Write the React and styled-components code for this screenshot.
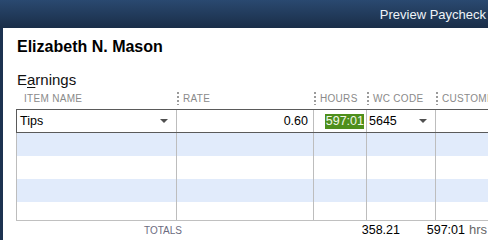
import styled, { createGlobalStyle } from 'styled-components';

const Global = createGlobalStyle`
  html, body {
    margin: 0;
    padding: 0;
    overflow: hidden;
    background: #fff;
  }
  body {
    font-family: "Liberation Sans", Arial, sans-serif;
  }
`;

const COLS = '160px 137px 53px 69px 1fr';

const Window = styled.div`
  width: 488px;
  height: 240px;
  box-sizing: border-box;
  border-left: 3px solid #1c3250;
  background: #fff;
  display: flex;
  flex-direction: column;
`;

const TitleBar = styled.div`
  height: 28px;
  flex: none;
  display: flex;
  align-items: center;
  justify-content: flex-end;
  padding-right: 2px;
  background: linear-gradient(#2a4970, #1a2e48);
  color: #eef3f8;
  font-size: 13px;
  margin-left: -3px;
`;

const Content = styled.div`
  padding: 10px 0 0 13px;
  display: flex;
  flex-direction: column;
`;

const Name = styled.div`
  font-size: 16px;
  line-height: 18px;
  font-weight: bold;
  color: #000;
  padding-left: 1px;
`;

const Section = styled.div`
  margin-top: 15px;
  font-size: 15px;
  line-height: 17px;
  color: #111;
  padding-left: 1px;
  u {
    text-decoration-thickness: 1px;
    text-underline-offset: 2px;
  }
`;

const HeaderRow = styled.div`
  display: grid;
  grid-template-columns: ${COLS};
  height: 21px;
  align-items: center;
  padding-left: 1px;
`;

const HeadCell = styled.div`
  display: flex;
  align-items: center;
  font-size: 10px;
  letter-spacing: 0.3px;
  color: #8a8a8a;
  white-space: nowrap;
  overflow: hidden;
  padding-left: ${p => (p.$first ? '7px' : '0')};
`;

const Sep = styled.span`
  display: inline-block;
  width: 2px;
  height: 13px;
  margin-right: 4px;
  flex: none;
  background: repeating-linear-gradient(to bottom, #9a9a9a 0 2px, transparent 2px 4px);
`;

const Table = styled.div`
  height: 111px;
  border-bottom: 1px solid #c0c0c0;
  overflow: hidden;
`;

const Row = styled.div`
  display: grid;
  grid-template-columns: ${COLS};
  height: ${p => (p.$active ? '22px' : '23px')};
  background: ${p => (p.$shade ? '#e1ebfb' : '#fff')};
  border-left: 1px solid ${p => (p.$active ? '#5a5a5a' : '#bdbdbd')};
  border-top: ${p => (p.$active ? '1px solid #5a5a5a' : 'none')};
  border-bottom: ${p => (p.$active ? '1px solid #5a5a5a' : 'none')};
`;

const Cell = styled.div`
  display: flex;
  align-items: center;
  justify-content: ${p => p.$align || 'flex-start'};
  border-right: 1px solid #bdbdbd;
  font-size: 12.5px;
  color: #000;
  padding: ${p => p.$pad || '0'};
  overflow: hidden;
  white-space: nowrap;
`;

const LastCell = styled.div``;

const Caret = styled.span`
  margin-left: auto;
  margin-right: 8px;
  width: 0;
  height: 0;
  border-left: 4px solid transparent;
  border-right: 4px solid transparent;
  border-top: 4px solid #505050;
`;

const Selected = styled.span`
  background: #4e8f1c;
  color: #f2f8ea;
  height: 15px;
  line-height: 15px;
  width: 39px;
  text-align: right;
  margin-right: 2px;
`;

const Totals = styled.div`
  display: flex;
  align-items: baseline;
  line-height: 17px;
  font-size: 12.5px;
  color: #000;
`;

const TotalsLabel = styled.span`
  width: 166px;
  text-align: right;
  font-size: 10px;
  color: #6c6c80;
`;

const Amount = styled.span`
  width: ${p => p.$w}px;
  text-align: right;
`;

const Unit = styled.span`
  margin-left: 4px;
  color: #666;
  font-size: 13px;
`;

const rows = [1, 2, 3, 4];

export default function App() {
  return (
    <>
      <Global />
      <Window>
        <TitleBar>Preview Paycheck</TitleBar>
        <Content>
          <Name>Elizabeth N. Mason</Name>
          <Section>E<u>a</u>rnings</Section>
          <HeaderRow>
            <HeadCell $first>ITEM NAME</HeadCell>
            <HeadCell><Sep />RATE</HeadCell>
            <HeadCell><Sep />HOURS</HeadCell>
            <HeadCell><Sep />WC CODE</HeadCell>
            <HeadCell><Sep />CUSTOMER:JOB</HeadCell>
          </HeaderRow>
          <Table>
            <Row $active>
              <Cell $pad="0 0 0 3px">Tips<Caret /></Cell>
              <Cell $align="flex-end" $pad="0 5px 0 0">0.60</Cell>
              <Cell $align="flex-end"><Selected>597:01</Selected></Cell>
              <Cell $pad="0 0 0 2px">5645<Caret /></Cell>
              <LastCell />
            </Row>
            {rows.map(i => (
              <Row key={i} $shade={i % 2 === 1}>
                <Cell />
                <Cell />
                <Cell />
                <Cell />
                <LastCell />
              </Row>
            ))}
          </Table>
          <Totals>
            <TotalsLabel>TOTALS</TotalsLabel>
            <Amount $w={218}>358.21</Amount>
            <Amount $w={65}>597:01</Amount>
            <Unit>hrs</Unit>
          </Totals>
        </Content>
      </Window>
    </>
  );
}
